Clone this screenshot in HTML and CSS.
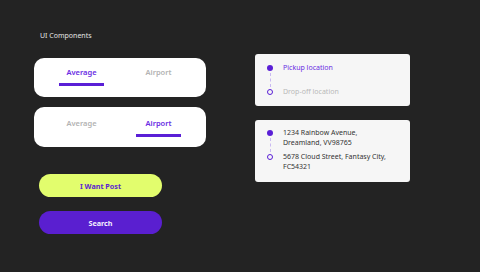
FILE: index.html
```html
<!DOCTYPE html>
<html>
<head>
<meta name="viewport" content="width=device-width, initial-scale=1.0">
<link rel="stylesheet" href="styles.css">
</head>
<body>
<div class="page">
  <div class="left">
    <div class="title">UI Components</div>

    <div class="tabs">
      <div class="tab active">Average<span class="bar"></span></div>
      <div class="tab">Airport<span class="bar"></span></div>
    </div>

    <div class="tabs second">
      <div class="tab">Average<span class="bar"></span></div>
      <div class="tab active">Airport<span class="bar"></span></div>
    </div>

    <button class="btn yellow">I Want Post</button>
    <button class="btn purple">Search</button>
  </div>

  <div class="right">
    <div class="route">
      <div class="marks">
        <span class="dot"></span>
        <span class="line"></span>
        <span class="ring"></span>
      </div>
      <div class="stops">
        <div class="stop pick">Pickup location</div>
        <div class="stop drop">Drop-off location</div>
      </div>
    </div>

    <div class="route filled">
      <div class="marks">
        <span class="dot"></span>
        <span class="line"></span>
        <span class="ring"></span>
      </div>
      <div class="stops">
        <div class="stop">1234 Rainbow Avenue,<br>Dreamland, VV98765</div>
        <div class="stop">5678 Cloud Street, Fantasy City,<br>FC54321</div>
      </div>
    </div>
  </div>
</div>
</body>
</html>
```

FILE: styles.css
```css
* {
  margin: 0px;
  padding: 0px;
  box-sizing: border-box;
}
body {
  width: 480px;
  height: 272px;
  overflow: hidden;
  background: #232323;
  font-family: "Noto Sans", "Open Sans", sans-serif;
}
.page {
  display: flex;
  gap: 49px;
  padding-left: 34px;
}
.left {
  display: flex;
  flex-direction: column;
  width: 172px;
  padding-top: 31px;
}
.title {
  height: 10px;
  line-height: 10px;
  font-size: 7px;
  color: #e4e4e4;
  padding-left: 6px;
}
.tabs {
  display: flex;
  height: 39px;
  margin-top: 17px;
  padding: 0 9px;
  background: #fff;
  border-radius: 10px;
}
.tabs.second {
  margin-top: 10px;
  height: 40px;
}
.tab {
  flex: 1;
  display: flex;
  flex-direction: column;
  align-items: center;
  padding-top: 9px;
  font-size: 7.5px;
  font-weight: 600;
  line-height: 10px;
  color: #b3b3b3;
}
.tabs.second .tab {
  padding-top: 11px;
}
.tab .bar {
  width: 45px;
  height: 3px;
  margin-top: 6px;
}
.tab.active {
  color: #6a2de3;
}
.tab.active .bar {
  background: #5a1fd6;
}
.btn {
  width: 123px;
  height: 23px;
  margin-left: 5px;
  border: none;
  border-radius: 12px;
  font-family: inherit;
  font-size: 7.2px;
  font-weight: 700;
}
.btn.yellow {
  margin-top: 27px;
  background: #e2fd6d;
  color: #5a1fd0;
}
.btn.purple {
  margin-top: 14px;
  background: #5a1fd0;
  color: #f4efff;
}
.right {
  display: flex;
  flex-direction: column;
  gap: 14px;
  width: 155px;
  padding-top: 54px;
}
.route {
  display: flex;
  gap: 10px;
  padding: 9px 12px;
  background: #f6f6f6;
  border-radius: 3px;
}
.route.filled {
  padding: 8px 12px 10px;
}
.marks {
  display: flex;
  flex-direction: column;
  align-items: center;
  width: 6px;
  padding: 2px 0 2px;
}
.route.filled .marks {
  padding: 2px 0 12px;
}
.dot, .ring {
  width: 6px;
  height: 6px;
  border-radius: 50%;
}
.dot {
  background: #5a1fd6;
}
.ring {
  border: 1px solid #5a1fd6;
}
.line {
  flex: 1;
  margin: 2px 0;
  border-left: 1px dashed #c9b9f2;
}
.stops {
  display: flex;
  flex-direction: column;
  gap: 14px;
}
.route.filled .stops {
  gap: 4px;
}
.stop {
  font-size: 7px;
  line-height: 10px;
  color: #333;
}
.stop.pick {
  color: #6a2de3;
}
.stop.drop {
  color: #b9b9b9;
}
```
